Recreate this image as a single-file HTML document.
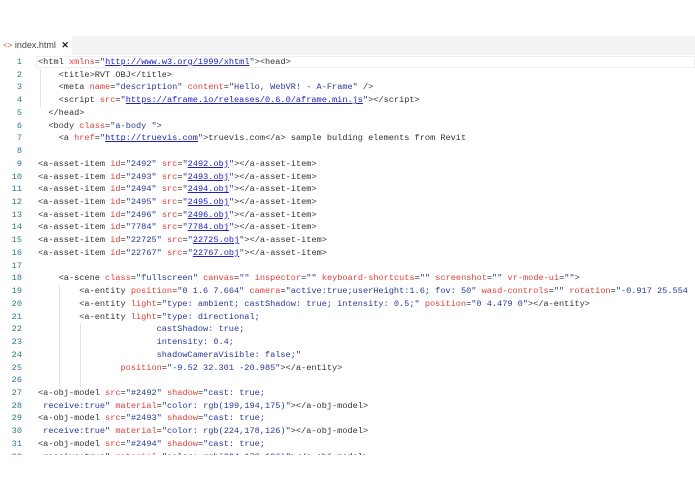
<!DOCTYPE html>
<html><head><meta charset="utf-8"><style>
html,body{margin:0;padding:0;background:#fff;width:695px;height:494px;overflow:hidden}
.bar{position:absolute;left:0;top:36px;width:695px;height:19px;background:#f3f3f3}
.tab{position:absolute;left:0;top:36px;width:72px;height:19px;background:#fff;font:9px "Liberation Sans",sans-serif;color:#444;line-height:19px;white-space:nowrap}
.tab .ic{color:#c0662e;margin-left:3px;font-size:8px}
.tab .x{font-weight:bold;margin-left:3px;font-size:9px;color:#222}
.code{position:absolute;left:0;top:56px;width:695px;height:399px;overflow:hidden;font:8.6px "Liberation Mono",monospace;line-height:12.73px;color:#333;white-space:pre}
.ln{position:absolute;left:0;width:22px;text-align:right;color:#2b7a93}
.t{position:absolute;left:38px}
.a{color:#e0403a}.s{color:#2a3a9a}.u{color:#2020c0;text-decoration:underline}
.g{position:absolute;width:1px;background:#e2e2e2}
.hl{position:absolute;left:36px;top:0;width:659px;height:12px;border:1px solid #eee;box-sizing:border-box}
</style></head><body>
<div class="bar"></div>
<div class="tab"><span class="ic">&lt;&gt;</span> index.html<span class="x"> ✕</span></div>
<div class="code">
<div class="hl"></div>
<div class="ln" style="top:0">1</div><div class="t" style="top:0">&lt;html <span class="a">xmlns</span>=<span class="s">"</span><span class="u">http://www.w3.org/1999/xhtml</span><span class="s">"</span>&gt;&lt;head&gt;</div>
<div class="ln" style="top:12.73px">2</div><div class="t" style="top:12.73px">    &lt;title&gt;RVT OBJ&lt;/title&gt;</div>
<div class="ln" style="top:25.46px">3</div><div class="t" style="top:25.46px">    &lt;meta <span class="a">name</span>=<span class="s">"description"</span> <span class="a">content</span>=<span class="s">"Hello, WebVR! - A-Frame"</span> /&gt;</div>
<div class="ln" style="top:38.19px">4</div><div class="t" style="top:38.19px">    &lt;script <span class="a">src</span>=<span class="s">"</span><span class="u">https://aframe.io/releases/0.6.0/aframe.min.js</span><span class="s">"</span>&gt;&lt;/script&gt;</div>
<div class="ln" style="top:50.92px">5</div><div class="t" style="top:50.92px">  &lt;/head&gt;</div>
<div class="ln" style="top:63.65px">6</div><div class="t" style="top:63.65px">  &lt;body <span class="a">class</span>=<span class="s">"a-body "</span>&gt;</div>
<div class="ln" style="top:76.38px">7</div><div class="t" style="top:76.38px">    &lt;a <span class="a">href</span>=<span class="s">"</span><span class="u">http://truevis.com</span><span class="s">"</span>&gt;truevis.com&lt;/a&gt; sample bulding elements from Revit</div>
<div class="ln" style="top:89.11px">8</div>
<div class="ln" style="top:101.84px">9</div><div class="t" style="top:101.84px">&lt;a-asset-item <span class="a">id</span>=<span class="s">"2492"</span> <span class="a">src</span>=<span class="s">"</span><span class="u">2492.obj</span><span class="s">"</span>&gt;&lt;/a-asset-item&gt;</div>
<div class="ln" style="top:114.57px">10</div><div class="t" style="top:114.57px">&lt;a-asset-item <span class="a">id</span>=<span class="s">"2493"</span> <span class="a">src</span>=<span class="s">"</span><span class="u">2493.obj</span><span class="s">"</span>&gt;&lt;/a-asset-item&gt;</div>
<div class="ln" style="top:127.3px">11</div><div class="t" style="top:127.3px">&lt;a-asset-item <span class="a">id</span>=<span class="s">"2494"</span> <span class="a">src</span>=<span class="s">"</span><span class="u">2494.obj</span><span class="s">"</span>&gt;&lt;/a-asset-item&gt;</div>
<div class="ln" style="top:140.03px">12</div><div class="t" style="top:140.03px">&lt;a-asset-item <span class="a">id</span>=<span class="s">"2495"</span> <span class="a">src</span>=<span class="s">"</span><span class="u">2495.obj</span><span class="s">"</span>&gt;&lt;/a-asset-item&gt;</div>
<div class="ln" style="top:152.76px">13</div><div class="t" style="top:152.76px">&lt;a-asset-item <span class="a">id</span>=<span class="s">"2496"</span> <span class="a">src</span>=<span class="s">"</span><span class="u">2496.obj</span><span class="s">"</span>&gt;&lt;/a-asset-item&gt;</div>
<div class="ln" style="top:165.49px">14</div><div class="t" style="top:165.49px">&lt;a-asset-item <span class="a">id</span>=<span class="s">"7784"</span> <span class="a">src</span>=<span class="s">"</span><span class="u">7784.obj</span><span class="s">"</span>&gt;&lt;/a-asset-item&gt;</div>
<div class="ln" style="top:178.22px">15</div><div class="t" style="top:178.22px">&lt;a-asset-item <span class="a">id</span>=<span class="s">"22725"</span> <span class="a">src</span>=<span class="s">"</span><span class="u">22725.obj</span><span class="s">"</span>&gt;&lt;/a-asset-item&gt;</div>
<div class="ln" style="top:190.95px">16</div><div class="t" style="top:190.95px">&lt;a-asset-item <span class="a">id</span>=<span class="s">"22767"</span> <span class="a">src</span>=<span class="s">"</span><span class="u">22767.obj</span><span class="s">"</span>&gt;&lt;/a-asset-item&gt;</div>
<div class="ln" style="top:203.68px">17</div>
<div class="ln" style="top:216.41px">18</div><div class="t" style="top:216.41px">    &lt;a-scene <span class="a">class</span>=<span class="s">"fullscreen"</span> <span class="a">canvas</span>=<span class="s">""</span> <span class="a">inspector</span>=<span class="s">""</span> <span class="a">keyboard-shortcuts</span>=<span class="s">""</span> <span class="a">screenshot</span>=<span class="s">""</span> <span class="a">vr-mode-ui</span>=<span class="s">""</span>&gt;</div>
<div class="ln" style="top:229.14px">19</div><div class="t" style="top:229.14px">        &lt;a-entity <span class="a">position</span>=<span class="s">"0 1.6 7.664"</span> <span class="a">camera</span>=<span class="s">"active:true;userHeight:1.6; fov: 50"</span> <span class="a">wasd-controls</span>=<span class="s">""</span> <span class="a">rotation</span>=<span class="s">"-0.917 25.554</span></div>
<div class="ln" style="top:241.87px">20</div><div class="t" style="top:241.87px">        &lt;a-entity <span class="a">light</span>=<span class="s">"type: ambient; castShadow: true; intensity: 0.5;"</span> <span class="a">position</span>=<span class="s">"0 4.479 0"</span>&gt;&lt;/a-entity&gt;</div>
<div class="ln" style="top:254.6px">21</div><div class="t" style="top:254.6px">        &lt;a-entity <span class="a">light</span>=<span class="s">"type: directional;</span></div>
<div class="ln" style="top:267.33px">22</div><div class="t" style="top:267.33px"><span class="s">                       castShadow: true;</span></div>
<div class="ln" style="top:280.06px">23</div><div class="t" style="top:280.06px"><span class="s">                       intensity: 0.4;</span></div>
<div class="ln" style="top:292.79px">24</div><div class="t" style="top:292.79px"><span class="s">                       shadowCameraVisible: false;"</span></div>
<div class="ln" style="top:305.52px">25</div><div class="t" style="top:305.52px">                <span class="a">position</span>=<span class="s">"-9.52 32.301 -20.985"</span>&gt;&lt;/a-entity&gt;</div>
<div class="ln" style="top:318.25px">26</div>
<div class="ln" style="top:330.98px">27</div><div class="t" style="top:330.98px">&lt;a-obj-model <span class="a">src</span>=<span class="s">"#2492"</span> <span class="a">shadow</span>=<span class="s">"cast: true;</span></div>
<div class="ln" style="top:343.71px">28</div><div class="t" style="top:343.71px"><span class="s"> receive:true"</span> <span class="a">material</span>=<span class="s">"color: rgb(199,194,175)"</span>&gt;&lt;/a-obj-model&gt;</div>
<div class="ln" style="top:356.44px">29</div><div class="t" style="top:356.44px">&lt;a-obj-model <span class="a">src</span>=<span class="s">"#2493"</span> <span class="a">shadow</span>=<span class="s">"cast: true;</span></div>
<div class="ln" style="top:369.17px">30</div><div class="t" style="top:369.17px"><span class="s"> receive:true"</span> <span class="a">material</span>=<span class="s">"color: rgb(224,178,126)"</span>&gt;&lt;/a-obj-model&gt;</div>
<div class="ln" style="top:381.9px">31</div><div class="t" style="top:381.9px">&lt;a-obj-model <span class="a">src</span>=<span class="s">"#2494"</span> <span class="a">shadow</span>=<span class="s">"cast: true;</span></div>
<div class="ln" style="top:394.63px">32</div><div class="t" style="top:394.63px"><span class="s"> receive:true"</span> <span class="a">material</span>=<span class="s">"color: rgb(224,178,126)"</span>&gt;&lt;/a-obj-model&gt;</div>
<div class="g" style="left:40px;top:13px;height:38px"></div>
<div class="g" style="left:59px;top:229px;height:102px"></div>
<div class="g" style="left:80px;top:267px;height:64px"></div>
</div>
</body></html>
